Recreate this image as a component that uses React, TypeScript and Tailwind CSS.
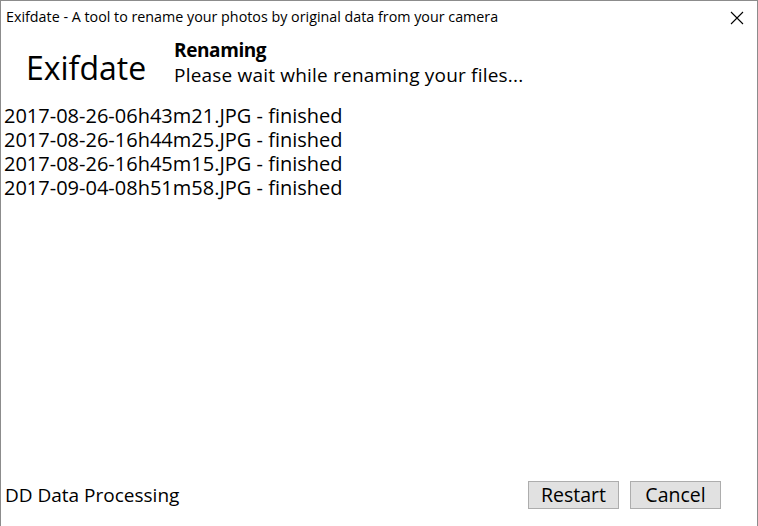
import React from "react";

const files = [
  "2017-08-26-06h43m21.JPG",
  "2017-08-26-16h44m25.JPG",
  "2017-08-26-16h45m15.JPG",
  "2017-09-04-08h51m58.JPG",
];

const App: React.FC = () => {
  return (
    <div className="w-[758px] h-[526px] bg-white border-x border-t border-[#8c8c8c] flex flex-col font-['Open_Sans',sans-serif] text-black overflow-hidden">
      {/* Title bar */}
      <div className="h-[31px] flex items-center justify-between pl-[5px] pr-[13px] shrink-0">
        <span className="text-[14.3px]">Exifdate - A tool to rename your photos by original data from your camera</span>
        <svg width="14" height="14" viewBox="0 0 14 14" className="mt-[2px]">
          <path d="M1 1L13 13M13 1L1 13" stroke="#000" strokeWidth="1.1" />
        </svg>
      </div>

      {/* Header */}
      <div className="flex items-center pl-[25px] h-[65px] shrink-0">
        <div className="text-[32px] leading-none w-[148px] mt-[6px]">Exifdate</div>
        <div className="flex flex-col mb-[4px]">
          <div className="text-[19px] font-bold leading-[25px] tracking-[-0.4px]">Renaming</div>
          <div className="text-[19px] leading-[25px] tracking-[0.2px]">Please wait while renaming your files...</div>
        </div>
      </div>

      {/* File list */}
      <div className="flex-1 pt-[7px] pl-[3px]">
        {files.map((f) => (
          <div key={f} className="text-[20px] leading-[24px]">
            {f} - finished
          </div>
        ))}
      </div>

      {/* Footer */}
      <div className="flex items-center justify-between h-[46px] pl-[4px] pr-[36px] pb-[16px] shrink-0">
        <span className="text-[19px]">DD Data Processing</span>
        <div className="flex gap-[11px]">
          <button className="w-[91px] h-[28px] bg-[#e1e1e1] border border-[#adadad] text-[19.5px] leading-none">
            Restart
          </button>
          <button className="w-[91px] h-[28px] bg-[#e1e1e1] border border-[#adadad] text-[19.5px] leading-none">
            Cancel
          </button>
        </div>
      </div>
    </div>
  );
};

export default App;
